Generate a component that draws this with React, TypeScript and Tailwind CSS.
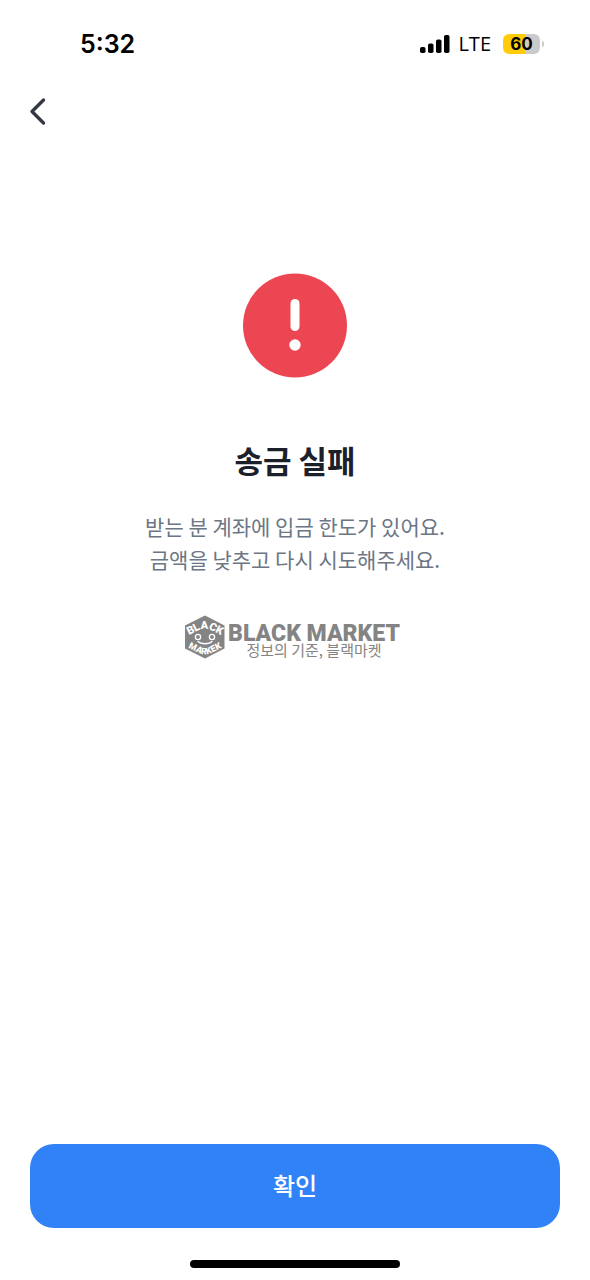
function StatusBar()
{
    return(
        <header className="flex h-22 shrink-0 items-center justify-between pl-20 pr-[46px] text-black">
            <time className="font-['Inter'] text-[25px] leading-8 font-semibold">5:32</time>
            <div className="flex items-center">
                <svg width="30" height="20" viewBox="0 0 30 20" fill="currentColor" aria-label="Signal">
                    <rect x="0" y="13" width="5.5" height="6" rx="1.8" />
                    <rect x="8" y="9.5" width="5.5" height="9.5" rx="1.8" />
                    <rect x="16" y="5.5" width="5.5" height="13.5" rx="1.8" />
                    <rect x="24" y="1" width="5.5" height="18" rx="1.8" />
                </svg>
                <span className="ml-2 font-['Open_Sans'] text-xl leading-8 font-medium">LTE</span>
                <div className="ml-3 flex h-5 w-[37px] items-center justify-center rounded-md bg-linear-to-r from-[#ffcc0a] from-60% to-[#cbcbcb] to-60% font-['Inter'] text-[17px] leading-5 font-bold">60</div>
                <div className="ml-0.5 h-1.5 w-0.5 rounded-r-full bg-[#cbcbcb]" />
            </div>
        </header>
    );
}

function MarketBadge()
{
    return(
        <svg width="42" height="44" viewBox="0 0 42 44" className="shrink-0" aria-label="Black Market badge">
            <defs>
                <path id="badge-top" d="M1 22 L15 15 Q21 12.5 27 15 L41 22" />
                <path id="badge-bottom" d="M0 31 L15 38 Q21 40.5 27 38 L42 31" />
            </defs>
            <path d="M21 0.5 L40.5 10.5 V33.5 L21 43.5 L1 33.5 V10.5 Z" fill="#848484" />
            <g fill="#fff" fontFamily="Roboto, sans-serif" fontWeight="900" textAnchor="middle">
                <text fontSize="11"><textPath href="#badge-top" startOffset="50%">BLACK</textPath></text>
                <text fontSize="9"><textPath href="#badge-bottom" startOffset="50%">MARKEK</textPath></text>
            </g>
            <g fill="none" stroke="#fff" strokeWidth="1.3">
                <circle cx="14" cy="22" r="2.6" />
                <circle cx="28" cy="22" r="2.6" />
                <path d="M14 26.5 C17 29.5 25 29.5 28 26.5" strokeLinecap="round" />
            </g>
        </svg>
    );
}

function App()
{
    return(
        <div className="flex min-h-screen flex-col bg-white font-['Noto_Sans_CJK_KR',sans-serif]">
            <StatusBar />
            <nav className="flex h-12 shrink-0 items-center px-7">
                <button type="button" aria-label="뒤로">
                    <svg width="20" height="30" viewBox="0 0 20 30" fill="none" stroke="#333842" strokeWidth="3.4" strokeLinecap="round" strokeLinejoin="round">
                        <path d="M15.5 3 L4 14.5 L15.5 26" />
                    </svg>
                </button>
            </nav>

            <main className="flex grow flex-col items-center pt-34">
                <svg width="106" height="106" viewBox="0 0 106 106" aria-label="오류">
                    <circle cx="53" cy="53.5" r="52" fill="#ed4653" />
                    <rect x="48.5" y="27" width="9" height="32" rx="4.5" fill="#fff" />
                    <circle cx="53" cy="73" r="5.7" fill="#fff" />
                </svg>
                <h1 className="mt-[58px] text-[31px] leading-12 font-bold text-[#1b202a]">송금 실패</h1>
                <p className="mt-[26px] text-center text-[21px] leading-[33px] text-[#6c7684]">
                    받는 분 계좌에 입금 한도가 있어요.<br />
                    금액을 낮추고 다시 시도해주세요.
                </p>
                <div className="mt-[39px] flex items-center gap-0.5 pr-1.5 text-[#848484]">
                    <MarketBadge />
                    <div className="flex flex-col items-center pt-2.5">
                        <strong className="font-['Roboto'] text-[23px] leading-4 font-black">BLACK MARKET</strong>
                        <span className="text-[15px] leading-4">정보의 기준, 블랙마켓</span>
                    </div>
                </div>
            </main>

            <footer className="flex shrink-0 flex-col items-center px-[30px] pb-3">
                <button type="button" className="h-21 w-full rounded-3xl bg-[#3182f6] pb-0.5 text-2xl font-medium text-white">확인</button>
                <div className="mt-8 h-2 w-[210px] rounded-full bg-black" />
            </footer>
        </div>
    );
}

export default App;
